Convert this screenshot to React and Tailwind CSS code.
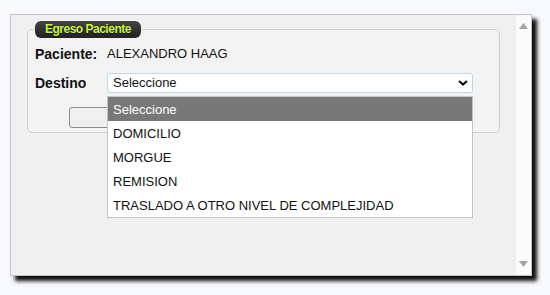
import React from 'react';

const opciones = [
  'Seleccione',
  'DOMICILIO',
  'MORGUE',
  'REMISION',
  'TRASLADO A OTRO NIVEL DE COMPLEJIDAD',
];

const Triangle = ({ up }) => (
  <svg width="9" height="6" viewBox="0 0 9 6" className="block">
    <path d={up ? 'M0 6 L4.5 0 L9 6 Z' : 'M0 0 L9 0 L4.5 6 Z'} fill="#a3a3a3" />
  </svg>
);

const EgresoPaciente = () => {
  return (
    <fieldset className="mx-4 mt-[6px] rounded-[5px] border border-[#cfcfcf] bg-[#f3f3f3] pl-[7px] pr-4 pb-1">
      {/* Legend */}
      <legend className="h-[17px] w-[106px] whitespace-nowrap rounded-[6px] bg-gradient-to-b from-[#444] to-[#222] pl-[10px] text-left text-[12px] font-bold leading-[17px] tracking-[-0.5px] text-[#c8f53a] [text-shadow:0_1px_1px_rgba(0,0,0,0.6)]">
        Egreso Paciente
      </legend>

      <div className="mt-[6px] flex h-5 items-center">
        <span className="w-[72px] text-[14px] font-bold text-[#111]">Paciente:</span>
        <span className="text-[13px] text-[#111]">ALEXANDRO HAAG</span>
      </div>

      <div className="mt-[9px] flex h-5 items-center">
        <span className="w-[72px] text-[14px] font-bold text-[#111]">Destino</span>
        <div className="relative">
          <div className="flex h-5 w-[366px] items-center justify-between rounded-[3px] border border-[#bcd9ec] bg-white pl-[5px] pr-[3px] text-[13px] text-[#111]">
            <span>Seleccione</span>
            <svg width="10" height="6" viewBox="0 0 10 6" className="mr-[1px]">
              <path d="M1 1 L5 4.5 L9 1" fill="none" stroke="#111" strokeWidth="2.2" />
            </svg>
          </div>

          {/* Open dropdown list */}
          <ul className="absolute left-0 top-[23px] z-10 w-[366px] border border-[#c4c4c4] bg-white text-[13px] text-[#111]">
            {opciones.map((op, i) => (
              <li
                key={op}
                className={`flex h-6 items-center pl-[5px] pt-[2px] ${i === 0 ? 'bg-[#787878] text-white' : ''}`}
              >
                {op}
              </li>
            ))}
          </ul>
        </div>
      </div>

      <div className="mt-[14px] flex pl-[34px]">
        <button className="h-[21px] w-[110px] rounded-[3px] border border-[#8c8c8c] bg-[#efefef]" />
      </div>
    </fieldset>
  );
};

export default function App() {
  return (
    <div className="h-[295px] w-[550px] overflow-hidden bg-[#f8f9fc] pl-[10px] pt-[14px] font-['Liberation_Sans',Arial,sans-serif]">
      <div className="flex h-[262px] w-[522px] border border-[#c4c4c4] bg-[#f0f0f0] shadow-[5px_5px_4px_rgba(0,0,0,0.95)]">
        <div className="flex-1">
          <EgresoPaciente />
        </div>
        <div className="flex w-[15px] flex-col items-center justify-between bg-[#fafafa] pb-[8px] pt-[8px]">
          <Triangle up />
          <Triangle />
        </div>
      </div>
    </div>
  );
}
